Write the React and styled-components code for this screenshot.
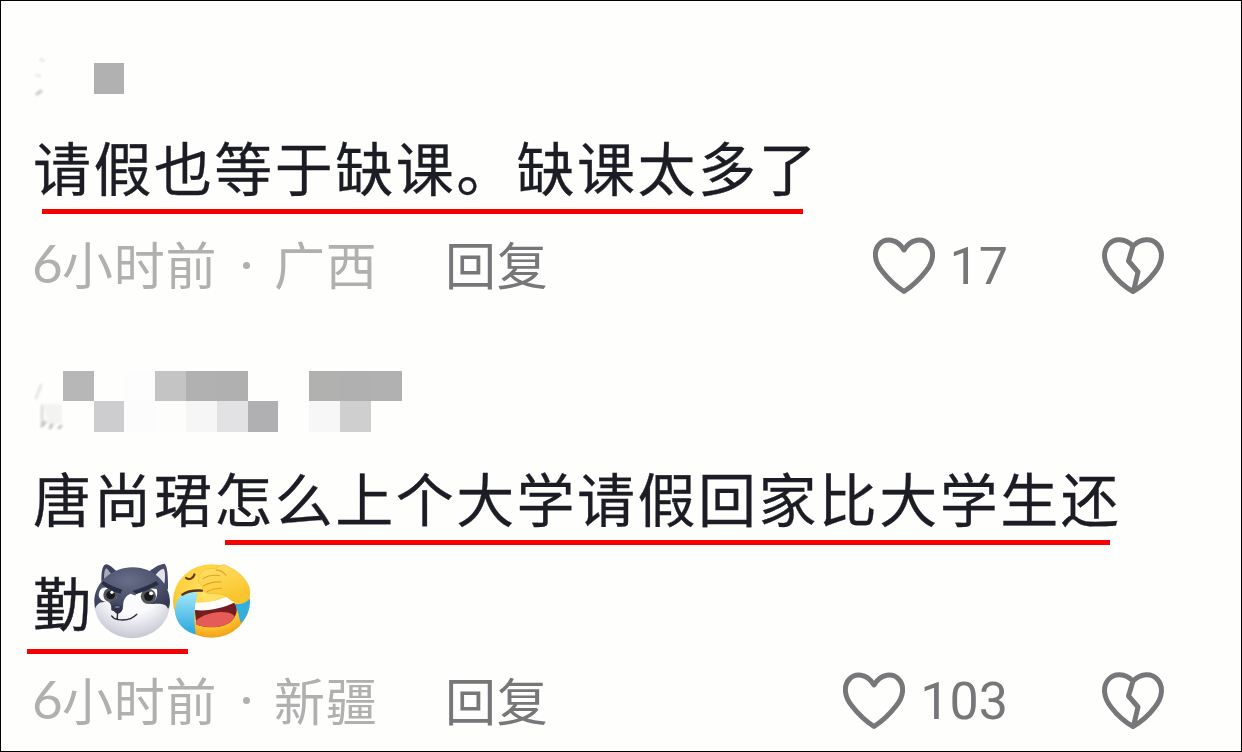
import React from 'react'
import styled, { createGlobalStyle } from 'styled-components'

// Tokens
const color = {
  INK: '#1c1c25',
  MUTED: '#b0b0b0',
  ACTION: '#77777a',
  MARK: '#f80000',
  PAGE: '#fefefd',
}

const cjk = '"Noto Sans CJK SC", sans-serif'
const none = 'transparent'

const firstName = [[none, none, '#b1b1b1']]

const secondName = [
  [none, '#b7b7b7', none, '#fdfdfd', '#c4c4c4', '#b1b1b1', '#b0b0b0', none, none, '#b1b1b0', '#b0b0b1', '#b1b1b1'],
  [none, none, '#cdcdcf', '#fcfcfc', '#fdfdfc', '#f6f6f7', '#e2e2e5', '#b0b0b3', none, '#f7f7f8', '#cfcfcf', none],
]

const GlobalStyle = createGlobalStyle`
  body {
    margin: 0;
    background: ${color.PAGE};
  }

  * {
    box-sizing: border-box;
  }
`

const App = () => (
  <>
    <GlobalStyle />
    <Frame>
      <Comment>
        <CensoredName rows={firstName} first />
        <Line $top={27}>请假也等于缺课。缺课太多了</Line>
        <Mark $gap={-2} $left={42} $width={761} />
        <Meta $top={8}>
          <Stamp place="广西" />
          <Reply>回复</Reply>
          <Actions count="17" />
        </Meta>
      </Comment>
      <Comment $top={61}>
        <CensoredName rows={secondName} />
        <Line $top={20}>唐尚珺怎么上个大学请假回家比大学生还</Line>
        <Mark $gap={-2} $left={225} $width={885} />
        <Line $top={11}>
          勤
          <Husky />
          <Facepalm />
        </Line>
        <Mark $gap={3} $left={27} $width={161} />
        <Meta $top={3}>
          <Stamp place="新疆" />
          <Reply>回复</Reply>
          <Actions count="103" />
        </Meta>
      </Comment>
    </Frame>
  </>
)

const CensoredName = ({ rows, first }) => (
  <Name $columns={rows[0].length}>
    {rows.map((row, y) => row.map((tone, x) => <Tile key={`${y}-${x}`} $tone={tone} />))}
    <Remnant viewBox="0 0 32 64">
      {first ? (
        <g fill="none" stroke="#c9c9c9" strokeLinecap="round">
          <path d="M9-4l2 2" strokeWidth="3" opacity=".4" />
          <path d="M4 12l4 1" strokeWidth="2.5" opacity=".35" />
          <path d="M5 31l4-3" strokeWidth="3" />
        </g>
      ) : (
        <g fill="none" strokeLinecap="round">
          <path d="M11 33h19v18l-13 5z" fill="#f3f3f2" />
          <path d="M9 14L4 27" stroke="#e2e2e2" strokeWidth="2.5" />
          <path d="M10 35v20" stroke="#d9d9d9" strokeWidth="2.5" />
          <path d="M10 55l3-4M18 57l2-3M27 57l2-2" stroke="#c3c3c3" strokeWidth="3" />
        </g>
      )}
    </Remnant>
  </Name>
)

const Stamp = ({ place }) => (
  <Info>
    <Hour>6</Hour>
    <Ago>小时前</Ago>
    <Dot />
    <span>{place}</span>
  </Info>
)

const Actions = ({ count }) => (
  <ActionGroup>
    <HeartIcon viewBox="0 0 62 58">
      <path d="M31 13C24 1 12 1 6.5 7C0 14 1.5 25 9 34C16 43 24 50 31 54.5C38 50 46 43 53 34C60.5 25 62 14 55.5 7C50 1 38 1 31 13Z" />
    </HeartIcon>
    <Count>{count}</Count>
    <HeartIcon viewBox="0 0 62 58">
      <path d="M31 9C23 1 12 1 6.5 7.5C0 15 2 26 9 35C15 43 23 50 31 54.5C39 50 47 43 53 35C60 26 62 15 55.5 7.5C50 1 39 1 31 9L26.5 24L36 35L31.5 54" />
    </HeartIcon>
  </ActionGroup>
)

const Husky = () => (
  <Emoji viewBox="222 40 232 228" $width={77} $height={76} $left={1}>
    <defs>
      <radialGradient id="fur" cx="45%" cy="30%" r="72%">
        <stop offset="0" stopColor="#686e87" />
        <stop offset=".65" stopColor="#4a4f69" />
        <stop offset="1" stopColor="#343a55" />
      </radialGradient>
      <radialGradient id="muzzle" cx="50%" cy="30%" r="70%">
        <stop offset=".5" stopColor="#fbfbfe" />
        <stop offset="1" stopColor="#c6c7d2" />
      </radialGradient>
    </defs>
    <path d="M246 112C242 80 245 44 258 43C271 44 282 57 294 68L270 100Z" fill="#3d435e" />
    <path d="M253 94C251 72 254 55 260 55L277 76Z" fill="#a9abb9" />
    <path d="M445 119C445 84 444 45 433 42C417 44 397 57 383 70L416 111Z" fill="#454b66" />
    <path d="M434 102C438 79 436 57 430 57C419 61 411 70 406 79Z" fill="#e1e2ea" />
    <ellipse cx="337" cy="161" rx="114" ry="105" fill="url(#muzzle)" />
    <path d="M223 154C224 98 276 52 338 52C401 51 451 101 451 157C450 168 448 175 445 178C440 161 420 162 401 163C380 166 353 151 350 139L332 132C316 138 309 153 310 170C306 184 287 190 274 181C275 161 268 154 253 157C235 157 229 168 225 177Z" fill="url(#fur)" />
    <path d="M237 131C240 111 258 108 284 122L291 144C277 158 257 161 244 151C237 145 235 138 237 131Z" fill="#fff" />
    <path d="M346 137C364 119 391 113 411 118C415 134 411 154 393 161C373 169 350 157 346 137Z" fill="#fff" />
    <circle cx="271" cy="136" r="21" fill="#55575c" />
    <circle cx="272" cy="136" r="13" fill="#17191d" />
    <circle cx="386" cy="140" r="23" fill="#55575c" />
    <circle cx="387" cy="140" r="14" fill="#17191d" />
    <circle cx="276" cy="128" r="5" fill="#fff" />
    <circle cx="394" cy="131" r="6" fill="#fff" />
    <path d="M249 94Q278 112 307 120L302 132Q271 126 245 103Z" fill="#292e45" />
    <path d="M337 124Q379 112 410 94L417 104Q390 119 350 133Z" fill="#292e45" />
    <path d="M276 169Q291 161 308 173Q311 181 300 190Q291 196 284 187Z" fill="#303348" />
    <ellipse cx="292" cy="172" rx="8" ry="3" fill="#737791" />
    <path d="M293 189L292 209M275 199Q282 209 294 210Q330 216 351 194" fill="none" stroke="#252836" strokeWidth="4" strokeLinecap="round" />
  </Emoji>
)

const Facepalm = () => (
  <Emoji viewBox="458 45 236 226" $width={79} $height={76} $left={1}>
    <defs>
      <radialGradient id="face" cx="48%" cy="38%" r="62%">
        <stop offset="0" stopColor="#ffe56d" />
        <stop offset=".7" stopColor="#ffcf38" />
        <stop offset="1" stopColor="#f2a116" />
      </radialGradient>
      <linearGradient id="tear" x1="0" y1="0" x2="0" y2="1">
        <stop offset="0" stopColor="#a2e7f8" />
        <stop offset="1" stopColor="#27a6de" />
      </linearGradient>
      <linearGradient id="palm" x1="0" y1="0" x2=".5" y2="1">
        <stop offset="0" stopColor="#ffe268" />
        <stop offset="1" stopColor="#fac42d" />
      </linearGradient>
      <clipPath id="mouth">
        <path d="M526 185C570 190 613 177 643 163C657 175 653 201 637 217C608 242 561 240 531 228Z" />
      </clipPath>
    </defs>
    <ellipse cx="576" cy="158" rx="115" ry="110" fill="url(#face)" />
    <path d="M526 163C565 165 603 154 626 143L645 165C616 185 567 198 526 190Z" fill="#fff" />
    <g clipPath="url(#mouth)">
      <path d="M510 150H670V250H510Z" fill="#741d20" />
      <ellipse cx="585" cy="222" rx="64" ry="29" fill="#e55b58" transform="rotate(-12 585 222)" />
    </g>
    <path d="M484 142C497 132 521 129 535 136C524 164 523 214 529 258C497 251 468 225 467 188C468 167 474 151 484 142Z" fill="url(#tear)" />
    <path d="M647 166C663 169 678 163 691 151C692 183 681 209 663 224C659 206 653 185 647 166Z" fill="#32aedf" />
    <path d="M489 139Q508 125 548 127" fill="none" stroke="#563322" strokeWidth="7" strokeLinecap="round" />
    <path d="M500 89C508 96 521 92 525 79" fill="none" stroke="#65401f" strokeWidth="7" strokeLinecap="round" />
    <path d="M538 91C537 72 560 58 588 61L608 50C620 49 628 57 643 64C678 86 697 119 689 145C679 166 646 169 625 148C612 137 597 137 580 136C558 138 545 126 550 115C540 108 536 100 538 91Z" fill="url(#palm)" stroke="#efb42e" strokeWidth="1.5" />
    <path d="M551 91Q572 78 599 82M552 113Q575 99 604 101M563 130Q586 119 606 120M590 65Q607 66 619 81" fill="none" stroke="#dfa428" strokeWidth="3.5" strokeLinecap="round" />
  </Emoji>
)

const Frame = styled.main`
  width: 1242px;
  height: 752px;
  padding-top: 62px;
  border: 1px solid #000;
  background: ${color.PAGE};
  overflow: hidden;
`

const Comment = styled.article`
  display: flex;
  flex-direction: column;
  margin-top: ${props => props.$top || 0}px;
`

const Name = styled.div`
  position: relative;
  display: grid;
  grid-template-columns: repeat(${props => props.$columns}, 30.8px);
  grid-auto-rows: 30.7px;
  margin-left: 31px;
`

const Tile = styled.span`
  background: ${props => props.$tone};
`

// Leftover strokes of the first glyph beside the mosaic
const Remnant = styled.svg`
  position: absolute;
  left: 0;
  top: 0;
  width: 32px;
  height: 64px;
  overflow: visible;
  filter: blur(0.8px);
`

const Line = styled.div`
  display: flex;
  align-items: center;
  height: 90px;
  margin: ${props => props.$top}px 0 0 32px;
  color: ${color.INK};
  font: 400 58px/90px ${cjk};
  letter-spacing: 2.45px;
  -webkit-text-stroke: 0.3px ${color.INK};
  white-space: nowrap;
`

const Mark = styled.div`
  width: ${props => props.$width}px;
  height: 5px;
  margin: ${props => props.$gap}px 0 0 ${props => props.$left - 1}px;
  background: ${color.MARK};
`

const Meta = styled.footer`
  display: flex;
  align-items: center;
  height: 88px;
  margin: ${props => props.$top}px 77px 0 32px;
  font: 400 51px/82px ${cjk};
  letter-spacing: 0.8px;
  white-space: nowrap;
`

const Info = styled.div`
  display: flex;
  align-items: center;
  width: 412px;
  padding-bottom: 5px;
  color: ${color.MUTED};
`

const Hour = styled.span`
  width: 30px;
  margin-left: -1px;
  font-family: Lato, sans-serif;
  font-size: 53px;
`

const Ago = styled.span`
  width: 156px;
`

const Dot = styled.i`
  width: 7px;
  height: 7px;
  margin: 4px 24px 0 25px;
  border-radius: 50%;
  background: ${color.MUTED};
`

const Reply = styled.span`
  padding-bottom: 5px;
  color: ${color.ACTION};
`

const ActionGroup = styled.div`
  display: flex;
  align-items: center;
  margin-left: auto;
  color: ${color.ACTION};
`

const HeartIcon = styled.svg`
  width: 62px;
  height: 58px;
  fill: none;
  stroke: currentColor;
  stroke-width: 5;
  stroke-linejoin: round;
  stroke-linecap: round;
`

const Count = styled.span`
  margin: 0 94px 0 15px;
  padding-top: 2px;
  font: 400 52px/88px Roboto, sans-serif;
  letter-spacing: 0;
`

const Emoji = styled.svg`
  flex: none;
  width: ${props => props.$width}px;
  height: ${props => props.$height}px;
  margin-left: ${props => props.$left || 0}px;
`

export default App
